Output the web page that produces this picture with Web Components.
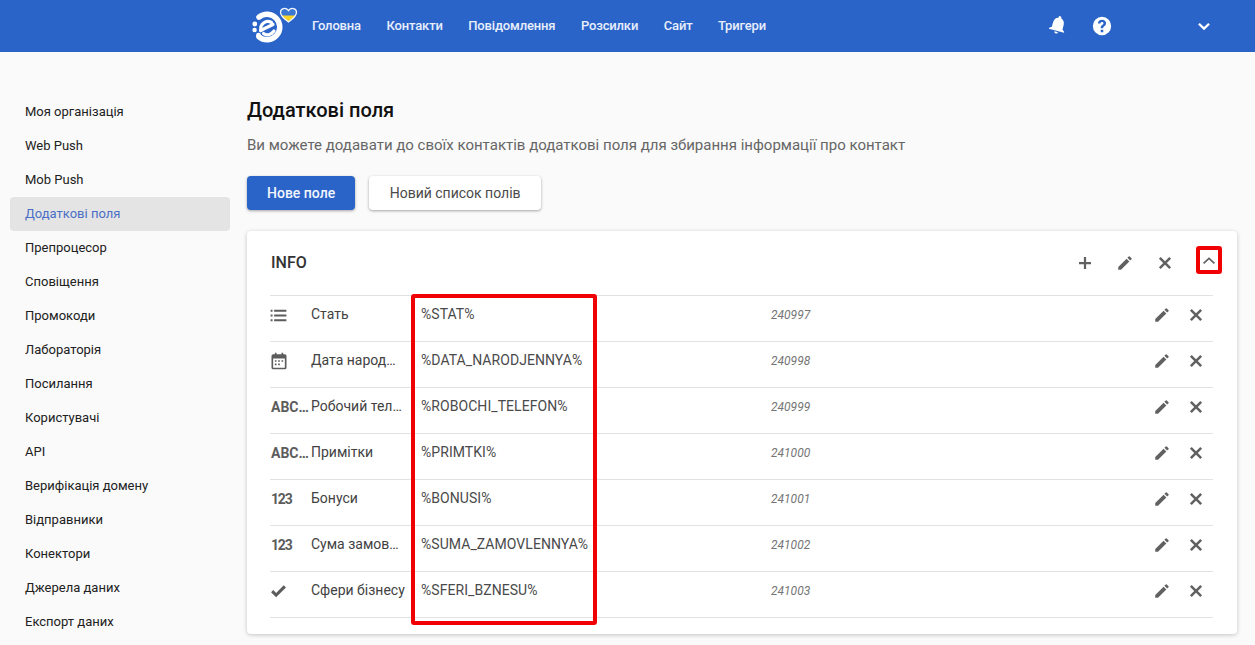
<!DOCTYPE html>
<html lang="uk">
<head>
<meta charset="utf-8">
<title>Додаткові поля</title>
<style>
  html, body { margin: 0; height: 645px; overflow: hidden; background: #fafafa; }
  body { font-family: Roboto, "Liberation Sans", sans-serif; color: #212121; }
</style>
</head>
<body>
<app-shell>
  <app-header slot="header"></app-header>
  <side-nav slot="side" active="Додаткові поля"></side-nav>
  <fields-page></fields-page>
</app-shell>

<script>
const ICONS = {
  list: '<path d="M3 5.500h2.200v2.200H3zM3 10.900h2.200v2.200H3zM3 16.300h2.200v2.200H3zM7 5.500h14v2.200H7zM7 10.900h14v2.200H7zM7 16.300h14v2.200H7z"/>',
  calendar: '<path d="M7 2h2v2h6V2h2v2h2a2 2 0 0 1 2 2v14a2 2 0 0 1-2 2H5a2 2 0 0 1-2-2V6a2 2 0 0 1 2-2h2zM5 9v11h14V9zM7 11h2v2H7zm4 0h2v2h-2zm4 0h2v2h-2zm-8 4h2v2H7zm4 0h2v2h-2z"/>',
  check: '<path d="M9 19.400 2.600 13l2.800-2.800L9 13.800 18.600 4.200l2.800 2.800z"/>',
  plus: '<path d="M10.500 4h3v6.500H20v3h-6.500V20h-3v-6.500H4v-3h6.500z"/>',
  pencil: '<path d="M3 17.300V21h3.700L17.800 9.900l-3.700-3.700zM20.700 7a1 1 0 0 0 0-1.400l-2.300-2.300a1 1 0 0 0-1.400 0l-1.800 1.800 3.700 3.700z"/>',
  close: '<path d="M6.300 3.900 12 9.600l5.700-5.700 2.400 2.400-5.700 5.700 5.700 5.700-2.400 2.400-5.700-5.700-5.700 5.700-2.400-2.400 5.700-5.700-5.700-5.700z"/>',
  chevronUp: '<path d="M12 8.200 20 15.800l-1.500 1.500L12 11.200l-6.500 6.100L4 15.800z"/>',
  chevronDown: '<path d="M5.600 7.400 12 13.600l6.400-6.200 2.400 2.400L12 18.400 3.200 9.800z"/>',
  bell: '<g transform="rotate(15 12 12)"><path d="M12 2a1.600 1.600 0 0 1 1.600 1.600v.6C16.600 5 18 7.500 18 11v4.500l2.500 2v1H3.500v-1l2.500-2V11c0-3.500 1.400-6 4.400-6.800v-.6A1.600 1.600 0 0 1 12 2zM10 19.600h4a2 2 0 0 1-4 0z"/></g>',
  help: '<path fill-rule="evenodd" d="M12 2a10 10 0 1 1 0 20 10 10 0 0 1 0-20zm-1.400 14.200v2.700h2.800v-2.700zM12 5.300c-2.500 0-4.300 1.500-4.400 3.900h2.700c.1-1 .7-1.600 1.700-1.600s1.600.6 1.600 1.400c0 .8-.5 1.200-1.300 1.800-1.300.9-1.800 1.700-1.700 3.600h2.700c0-1 .2-1.500 1.200-2.200 1.100-.8 1.900-1.700 1.900-3.300 0-2.100-1.800-3.600-4.400-3.600z"/>'
};

class AppIcon extends HTMLElement {
  connectedCallback() {
    const size = this.getAttribute('size') || 20;
    this.attachShadow({ mode: 'open' }).innerHTML = `
      <style>
        :host { display: inline-flex; flex: none; width: ${size}px; height: ${size}px; color: inherit; }
        svg { width: 100%; height: 100%; fill: currentColor; display: block; }
      </style>
      <svg viewBox="0 0 24 24">${ICONS[this.getAttribute('name')] || ''}</svg>`;
  }
}
customElements.define('app-icon', AppIcon);

class AppShell extends HTMLElement {
  constructor() {
    super();
    this.attachShadow({ mode: 'open' }).innerHTML = `
      <style>
        :host { display: block; }
        .body { display: flex; align-items: flex-start; }
        .side { flex: 0 0 230px; padding-top: 43px; }
        .main { flex: 1; min-width: 0; padding: 42px 18px 0 17px; }
      </style>
      <slot name="header"></slot>
      <div class="body">
        <div class="side"><slot name="side"></slot></div>
        <div class="main"><slot></slot></div>
      </div>`;
  }
}
customElements.define('app-shell', AppShell);

class AppHeader extends HTMLElement {
  connectedCallback() {
    const links = ['Головна', 'Контакти', 'Повідомлення', 'Розсилки', 'Сайт', 'Тригери'];
    this.attachShadow({ mode: 'open' }).innerHTML = `
      <style>
        :host { display: flex; height: 52px; align-items: center; background: #2b64c9; color: #fff; padding-left: 250px; box-sizing: border-box; }
        .logo { display: block; width: 48px; height: 44px; margin-right: 14px; }
        nav { display: flex; gap: 25.500px; font-size: 13px; font-weight: 500; letter-spacing: -.15px; color: #e8effb; padding-bottom: 2px; }
        .right { margin-left: auto; display: flex; align-items: center; padding-right: 43px; }
        .bell { margin-right: 22px; margin-bottom: 2px; }
        .help { margin-right: 83px; }
      </style>
      <svg class="logo" viewBox="0 0 48 44">
        <defs><clipPath id="top"><rect x="28" y="0" width="20" height="11.500"/></clipPath></defs>
        <g fill="none" stroke="#fff" stroke-linecap="round">
          <path d="M9 13.200A12.700 12.700 0 1 1 9 32.800" stroke-width="5.500"/>
          <path d="M10.500 26.500 23 20.500" stroke-width="3.200"/>
          <path d="M11 26.500C9.500 20 16 15.500 21.500 18.500" stroke-width="3.200"/>
          <path d="M13.500 29.500C16.500 32 21 31 24 27" stroke-width="3.200"/>
        </g>
        <g fill="#fff">
          <circle cx="4.800" cy="20" r="2.400"/>
          <circle cx="4.600" cy="26" r="2.200"/>
          <circle cx="8.500" cy="31.200" r="2.400"/>
        </g>
        <path id="heart" d="M38.500 18c-3.400-2.600-8-5.400-8-9.700 0-4 5.300-5.300 8-1.700 2.700-3.600 8-2.300 8 1.700 0 4.300-4.600 7.100-8 9.700z" fill="#f5d327"/>
        <path d="M38.500 18c-3.400-2.600-8-5.400-8-9.700 0-4 5.300-5.300 8-1.700 2.700-3.600 8-2.300 8 1.700 0 4.300-4.600 7.100-8 9.700z" fill="#3a78d4" clip-path="url(#top)"/>
        <path d="M38.500 18c-3.400-2.600-8-5.400-8-9.700 0-4 5.300-5.300 8-1.700 2.700-3.600 8-2.300 8 1.700 0 4.300-4.600 7.100-8 9.700z" fill="none" stroke="#f3f6fc" stroke-width="1.300"/>
      </svg>
      <nav>${links.map(l => `<span>${l}</span>`).join('')}</nav>
      <div class="right">
        <app-icon class="bell" name="bell" size="22"></app-icon>
        <app-icon class="help" name="help" size="22"></app-icon>
        <app-icon name="chevronDown" size="16"></app-icon>
      </div>`;
  }
}
customElements.define('app-header', AppHeader);

class SideNav extends HTMLElement {
  connectedCallback() {
    const items = ['Моя організація', 'Web Push', 'Mob Push', 'Додаткові поля', 'Препроцесор', 'Сповіщення', 'Промокоди', 'Лабораторія', 'Посилання', 'Користувачі', 'API', 'Верифікація домену', 'Відправники', 'Конектори', 'Джерела даних', 'Експорт даних'];
    const active = this.getAttribute('active');
    this.attachShadow({ mode: 'open' }).innerHTML = `
      <style>
        :host { display: block; padding-left: 10px; font-size: 13px; color: #212121; }
        a { display: flex; align-items: center; height: 34px; box-sizing: border-box; padding: 0 0 2px 15px; border-radius: 4px; }
        a.on { background: #e4e4e4; color: #4a6fc4; }
      </style>
      ${items.map(i => `<a class="${i === active ? 'on' : ''}">${i}</a>`).join('')}`;
  }
}
customElements.define('side-nav', SideNav);

class UiButton extends HTMLElement {
  connectedCallback() {
    const primary = this.hasAttribute('primary');
    this.attachShadow({ mode: 'open' }).innerHTML = `
      <style>
        :host { display: inline-flex; align-items: center; justify-content: center; height: 34px; box-sizing: border-box; border-radius: 4px; font-size: 14px;
          font-weight: ${primary ? 500 : 400}; padding: 0 ${primary ? 20 : 20.5}px;
          background: ${primary ? '#2b64c9' : '#fff'}; color: ${primary ? '#f2f6fd' : '#4a4a4a'};
          box-shadow: 0 1px 3px rgba(0,0,0,.35); }
      </style>
      <slot></slot>`;
  }
}
customElements.define('ui-button', UiButton);

class FieldRow extends HTMLElement {
  connectedCallback() {
    const type = this.getAttribute('type');
    const sizes = { list: 21, calendar: 20, check: 19 };
    const mark = sizes[type]
      ? `<app-icon class="${type}" name="${type}" size="${sizes[type]}"></app-icon>`
      : `<b class="${/^\d+$/.test(type) ? 'num' : ''}">${type}</b>`;
    this.attachShadow({ mode: 'open' }).innerHTML = `
      <style>
        :host { display: grid; grid-template-columns: 41px 110px 350px 1fr auto; align-items: center; height: 46px; box-sizing: border-box; padding-bottom: 9px;
          border-top: 1px solid #e2e2e2; font-size: 14px; color: #424242; }
        .mark { display: flex; align-items: center; color: #5c5c5c; padding-top: 2px; }
        .list { margin-left: -2px; }
        .calendar, .check { margin-left: -1px; }
        b { display: block; margin-left: 1px; font-size: 14px; font-weight: 700; width: 38px; overflow: hidden; text-overflow: ellipsis; white-space: nowrap; }
        b.num { letter-spacing: -1.200px; }
        .label { overflow: hidden; text-overflow: ellipsis; white-space: nowrap; width: 95px; }
        .key { letter-spacing: .06px; color: #4a4a4a; }
        .id { font-size: 12px; font-style: italic; color: #757575; padding-top: 2px; }
        .acts { display: flex; gap: 16px; color: #616161; padding: 2px 8px 0 0; }
      </style>
      <div class="mark">${mark}</div>
      <div class="label">${this.getAttribute('label')}</div>
      <div class="key">${this.getAttribute('key')}</div>
      <div class="id">${this.getAttribute('fid')}</div>
      <div class="acts"><app-icon name="pencil" size="18"></app-icon><app-icon name="close" size="18"></app-icon></div>`;
  }
}
customElements.define('field-row', FieldRow);

class FieldCard extends HTMLElement {
  connectedCallback() {
    this.attachShadow({ mode: 'open' }).innerHTML = `
      <style>
        :host { display: block; position: relative; background: #fff; border-radius: 4px; box-shadow: 0 1px 4px rgba(0,0,0,.22); padding: 0 24px 16px 23px; }
        .head { display: flex; align-items: center; height: 64px; }
        h2 { margin: 0 0 2px 1px; font-size: 16px; font-weight: 500; flex: 1; color: #333; }
        .tools { display: flex; align-items: center; color: #616161; margin-right: -16px; }
        .tool { display: flex; width: 40px; justify-content: center; }
        .toggle-btn { margin-left: 4px; margin-bottom: 6px; }
        .rows { border-bottom: 1px solid #e2e2e2; }
        .mark { position: absolute; box-sizing: border-box; border: 4px solid #f00000; border-radius: 3px; pointer-events: none; }
        .mark.keys { left: 164px; top: 63px; width: 186px; height: 331px; }
        .mark.toggle { left: 949px; top: 15px; width: 26px; height: 28px; }
      </style>
      <div class="head">
        <h2>${this.getAttribute('title')}</h2>
        <div class="tools">
          <span class="tool"><app-icon name="plus" size="18"></app-icon></span>
          <span class="tool"><app-icon name="pencil" size="18"></app-icon></span>
          <span class="tool"><app-icon name="close" size="18"></app-icon></span>
          <span class="tool toggle-btn"><app-icon name="chevronUp" size="18"></app-icon></span>
        </div>
      </div>
      <div class="rows"><slot></slot></div>
      <div class="mark keys"></div>
      <div class="mark toggle"></div>`;
  }
}
customElements.define('field-card', FieldCard);

class FieldsPage extends HTMLElement {
  connectedCallback() {
    const rows = [
      ['list', 'Стать', '%STAT%', '240997'],
      ['calendar', 'Дата народження', '%DATA_NARODJENNYA%', '240998'],
      ['ABC123', 'Робочий телефон', '%ROBOCHI_TELEFON%', '240999'],
      ['ABC123', 'Примітки', '%PRIMTKI%', '241000'],
      ['123', 'Бонуси', '%BONUSI%', '241001'],
      ['123', 'Сума замовлення', '%SUMA_ZAMOVLENNYA%', '241002'],
      ['check', 'Сфери бізнесу', '%SFERI_BZNESU%', '241003']
    ];
    this.attachShadow({ mode: 'open' }).innerHTML = `
      <style>
        :host { display: block; }
        h1 { margin: 0; font-size: 20px; line-height: 32px; font-weight: 500; color: #111; }
        p { margin: 7px 0 0; font-size: 15px; line-height: 24px; color: #666; }
        .btns { display: flex; gap: 14px; margin: 19px 0 21px; }
      </style>
      <h1>Додаткові поля</h1>
      <p>Ви можете додавати до своїх контактів додаткові поля для збирання інформації про контакт</p>
      <div class="btns">
        <ui-button primary>Нове поле</ui-button>
        <ui-button>Новий список полів</ui-button>
      </div>
      <field-card title="INFO">
        ${rows.map(r => `<field-row type="${r[0]}" label="${r[1]}" key="${r[2]}" fid="${r[3]}"></field-row>`).join('')}
      </field-card>`;
  }
}
customElements.define('fields-page', FieldsPage);
</script>
</body>
</html>
